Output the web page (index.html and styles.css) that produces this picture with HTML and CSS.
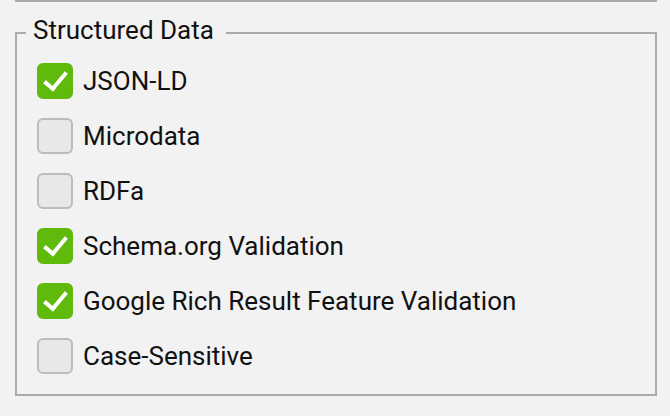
FILE: index.html
```html
<!DOCTYPE html>
<html>
<head>
    <title>Structured Data</title>
    <link rel="stylesheet" href="styles.css">
</head>
<body>
    <div class="prev-group"></div>
    <fieldset class="group">
        <legend><span class="legend-text">Structured Data</span></legend>
        <label class="option"><input type="checkbox" checked><span class="box"></span>JSON-LD</label>
        <label class="option"><input type="checkbox"><span class="box"></span>Microdata</label>
        <label class="option"><input type="checkbox"><span class="box"></span>RDFa</label>
        <label class="option"><input type="checkbox" checked><span class="box"></span>Schema.org Validation</label>
        <label class="option"><input type="checkbox" checked><span class="box"></span>Google Rich Result Feature Validation</label>
        <label class="option"><input type="checkbox"><span class="box"></span>Case-Sensitive</label>
    </fieldset>
</body>
</html>
```

FILE: styles.css
```css
body {
    margin: 0;
    background-color: #f2f2f2;
    font-family: Roboto, "Liberation Sans", sans-serif;
    color: #111;
}
.prev-group {
    height: 0;
    margin: 0 13px 0 15px;
    border-bottom: 2px solid #aaaaaa;
}
.group {
    margin: 17px 13px 0 15px;
    padding: 6px 0 11px 20px;
    border: 2px solid #aaaaaa;
    min-width: 0;
}
legend {
    font-size: 26px;
    padding: 0 12px 0 7px;
    margin-left: -11px;
    line-height: 28px;
}
.legend-text {
    position: relative;
    top: -3px;
}
.option {
    display: flex;
    align-items: center;
    gap: 10px;
    height: 55px;
    font-size: 26px;
}
.option input {
    display: none;
}
.box {
    width: 32px;
    height: 32px;
    border: 2px solid #bcbcbc;
    border-radius: 6px;
    background-color: #e8e8e8;
    position: relative;
}
.option input:checked + .box {
    background-color: #5fba0c;
    border-color: #5fba0c;
}
.option input:checked + .box::after {
    content: "";
    position: absolute;
    left: 10px;
    top: 2px;
    width: 9px;
    height: 19px;
    border: solid white;
    border-width: 0 4px 4px 0;
    transform: rotate(40deg);
}
```
